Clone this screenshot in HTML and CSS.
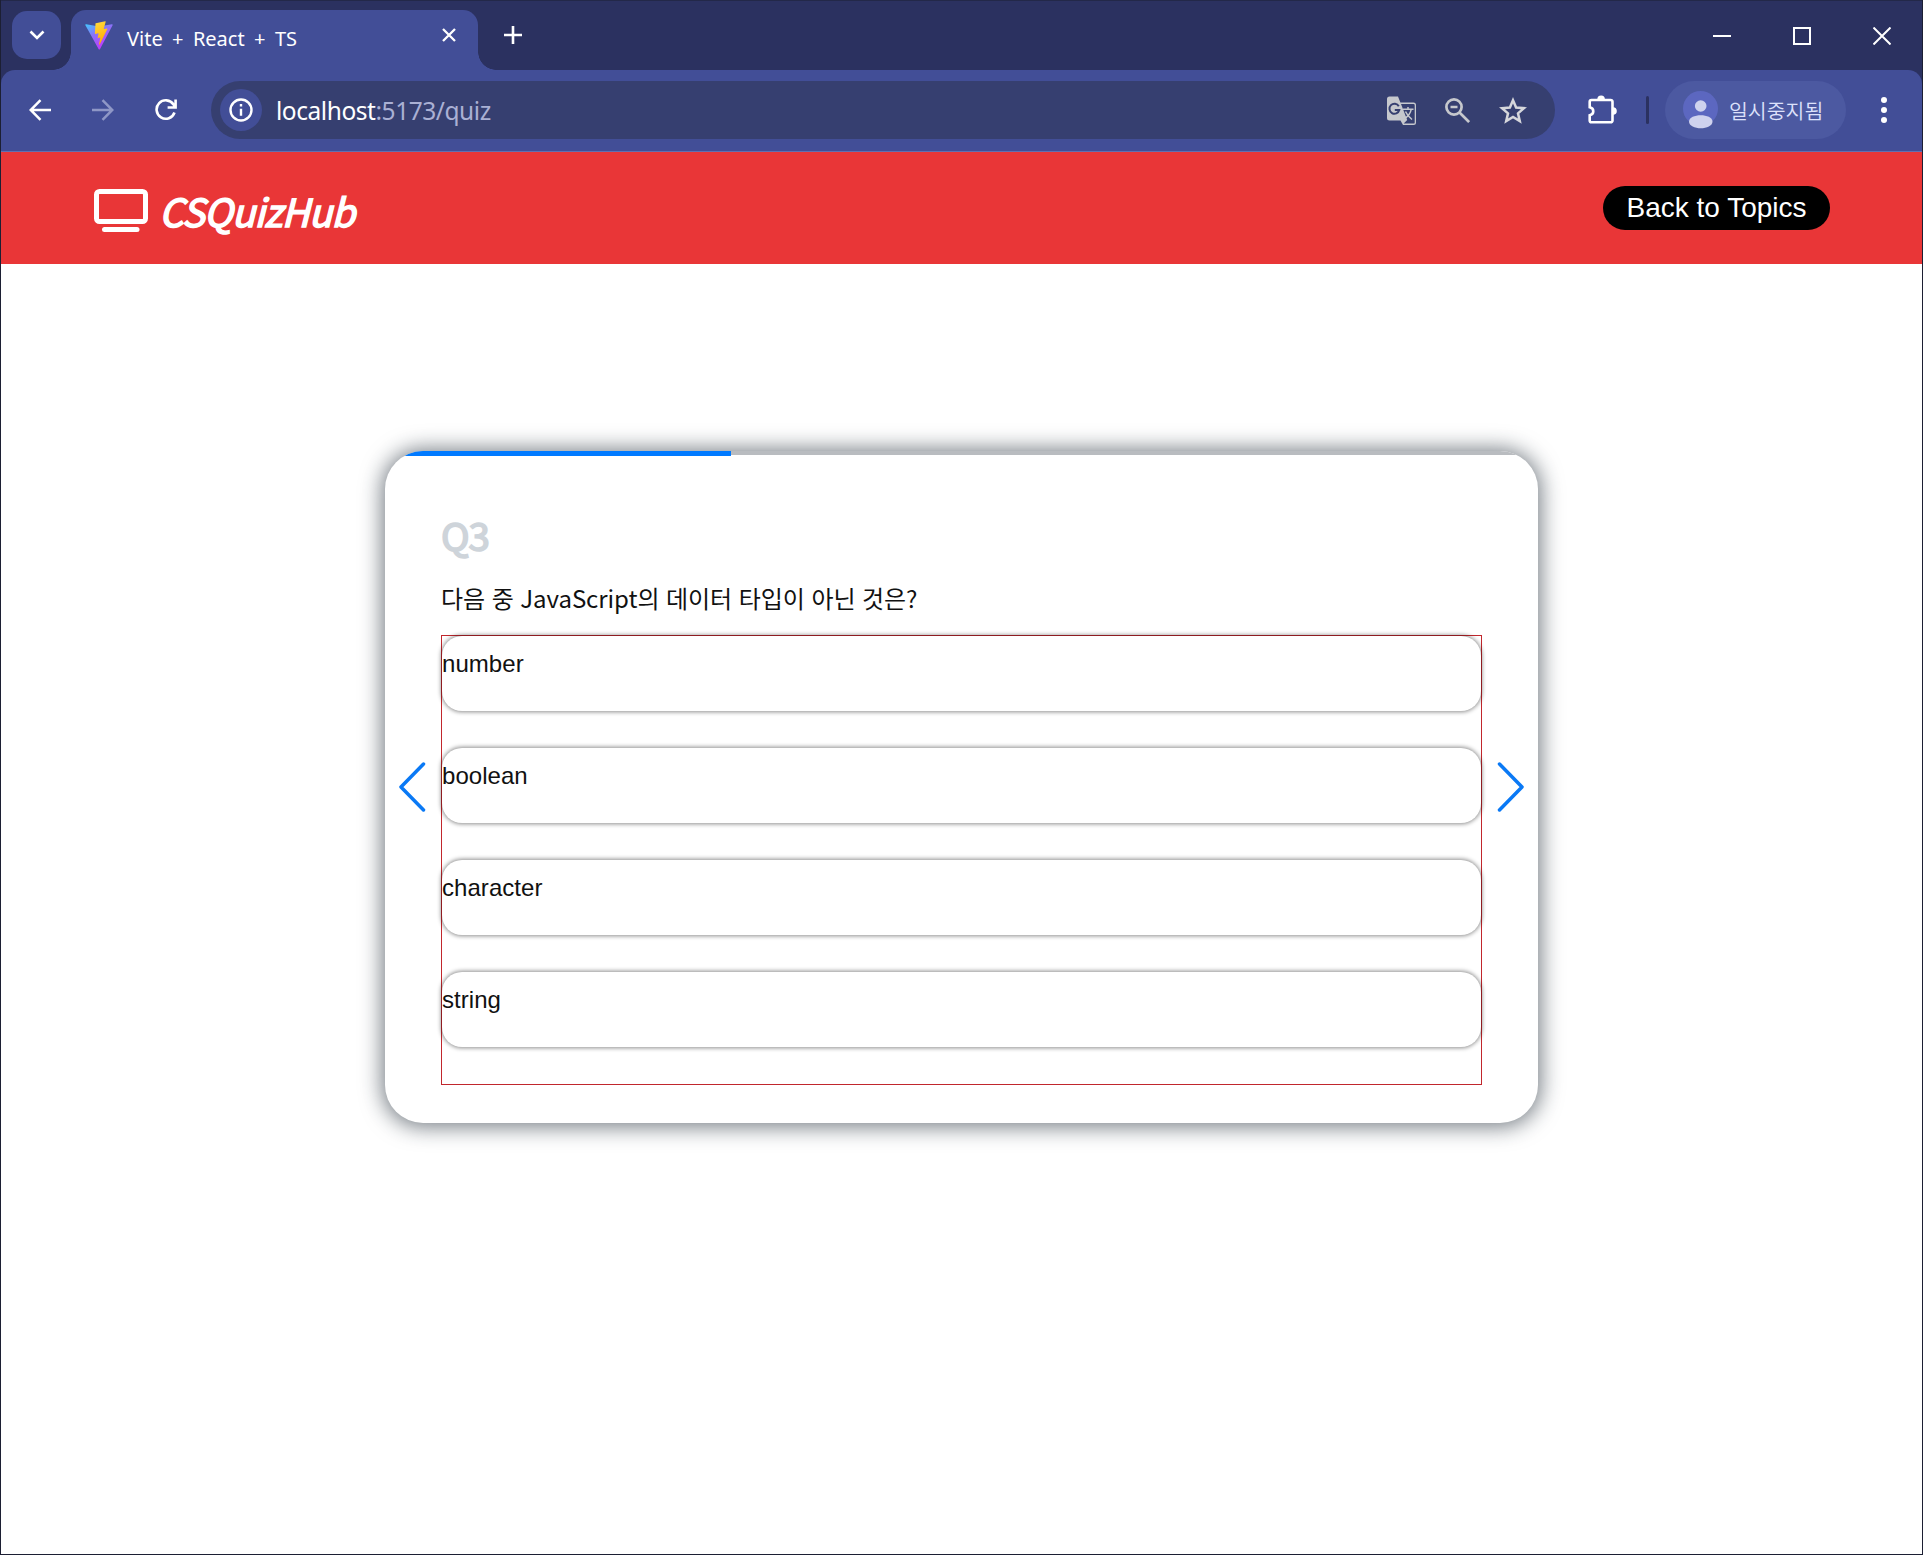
FILE: index.html
```html
<!DOCTYPE html>
<html lang="ko">
<head>
<meta charset="utf-8">
<title>Vite + React + TS</title>
<link rel="stylesheet" href="styles.css">
</head>
<body>
<div class="window">
  <div class="tabstrip">
    <button class="tab-search" aria-label="Search tabs"><svg width="16" height="16" viewBox="0 0 16 16" fill="none" stroke="#fff" stroke-width="2.6"><path d="M1.5 4.5 8 11l6.500-6.500"/></svg></button>
    <div class="tab">
      <svg class="favicon" width="28" height="29" viewBox="0 0 28 29">
        <defs>
          <linearGradient id="va" x1="0" y1="0" x2=".6" y2="1"><stop offset="0" stop-color="#41c8ff"/><stop offset=".45" stop-color="#8a72f8"/><stop offset="1" stop-color="#c534fe"/></linearGradient>
          <linearGradient id="vb" x1=".3" y1="0" x2=".6" y2="1"><stop offset="0" stop-color="#ffd83a"/><stop offset="1" stop-color="#ffa800"/></linearGradient>
        </defs>
        <path d="M27.600 4.300 14.900 28.200c-.3.500-1 .5-1.200 0L.4 4.300c-.3-.6.200-1.200.8-1.100L14 5.500l12.800-2.300c.7-.1 1.100.6.8 1.100z" fill="url(#va)"/>
        <path d="M20.200.3 10.800 2.200c-.2 0-.3.200-.3.300L9.900 12.500c0 .3.200.5.500.4l2.700-.6c.3-.1.500.200.400.5l-.8 3.900c-.1.300.200.500.500.400l1.600-.5c.3-.1.500.2.500.5l-1.300 6.100c-.1.400.4.600.6.300l.2-.2L22.400 8c.1-.3-.1-.6-.4-.5l-2.800.5c-.3.100-.5-.2-.4-.400L20.700.8c0-.3-.2-.6-.5-.5z" fill="url(#vb)"/>
      </svg>
      <span class="tab-title">Vite + React + TS</span>
      <svg class="tab-close" width="14" height="14" viewBox="0 0 14 14" stroke="#fff" stroke-width="2.300"><path d="M1 1l12 12M13 1L1 13"/></svg>
    </div>
    <svg class="new-tab" width="18" height="18" viewBox="0 0 18 18" stroke="#fff" stroke-width="2.600"><path d="M9 0v18M0 9h18"/></svg>
    <div class="controls">
      <svg width="18" height="18" viewBox="0 0 18 18" stroke="#fff" stroke-width="2"><path d="M0 9h18"/></svg>
      <svg width="18" height="18" viewBox="0 0 18 18" fill="none" stroke="#fff" stroke-width="2"><path d="M1 1h16v16H1z"/></svg>
      <svg width="18" height="18" viewBox="0 0 18 18" stroke="#fff" stroke-width="2"><path d="M.5.5l17 17M17.500.5l-17 17"/></svg>
    </div>
  </div>

  <div class="toolbar">
    <svg class="nav-back" width="22" height="22" viewBox="0 0 22 22" fill="none" stroke="#fff" stroke-width="2.500"><path d="M22 11H2M11.500 1.200 1.700 11l9.800 9.800"/></svg>
    <svg class="nav-forward" width="22" height="22" viewBox="0 0 22 22" fill="none" stroke="#8f97c6" stroke-width="2.500"><path d="M0 11h20M10.500 1.200 20.300 11l-9.800 9.800"/></svg>
    <svg class="nav-reload" width="22" height="22" viewBox="0 0 22 22" fill="none" stroke="#fff" stroke-width="2.600"><path d="M19.500 13.500A9.200 9.200 0 1 1 18.500 5.500L20.300 8M20.600.5v8h-8"/></svg>
    <div class="address">
      <span class="site-info"><svg width="24" height="24" viewBox="0 0 24 24" fill="none" stroke="#fff" stroke-width="2.400"><circle cx="12" cy="12" r="10.500"/><path d="M12 10.800v7M12 6v2.600"/></svg></span>
      <span class="url">localhost<span class="path">:5173/quiz</span></span>
      <svg class="act-translate" width="30" height="30" viewBox="0 0 30 30">
        <path d="M2.500.5H11l2.400 6H26.500a2.500 2.500 0 0 1 2.500 2.500v17.500a2.500 2.500 0 0 1-2.500 2.500H16l-2.500-4.500H2.500A2.500 2.500 0 0 1 0 22V3A2.500 2.500 0 0 1 2.500.5z" fill="#c6c8cd"/>
        <path d="M14 8h12.500a1.200 1.200 0 0 1 1.200 1.200v17.200a1.200 1.200 0 0 1-1.200 1.200H16.700l3.500-3.500z" fill="#363f70"/>
        <path d="M11.800 10.200A5 5 0 1 0 12.300 14H7.800" fill="none" stroke="#363f70" stroke-width="2"/>
        <path d="M16 13.200h10.500M21 11v2.200M24.300 13.200c-.8 4-3.500 7.500-7 9.800M18.500 15.500c1 2.500 3.500 5.500 6.500 8" fill="none" stroke="#c6c8cd" stroke-width="1.500"/>
      </svg>
      <svg class="act-zoom" width="25" height="25" viewBox="0 0 25 25" fill="none" stroke="#c6c8cd" stroke-width="2.700"><circle cx="9" cy="9" r="7.600"/><path d="M14.500 14.500l9.600 9.600M5.500 9h7"/></svg>
      <svg class="act-star" width="28" height="27" viewBox="0 0 28 27" fill="none" stroke="#d6d7dc" stroke-width="2.500"><path d="M14 3.200l3.100 7.300 7.900.7-6 5.200 1.800 7.700L14 20l-6.800 4.100L9 16.400l-6-5.200 7.900-.7z"/></svg>
    </div>
    <svg class="extensions" width="29" height="29" viewBox="0 0 29 29"><path d="M3.500 5h19.200a1.800 1.800 0 0 1 1.800 1.800v18.700a1.800 1.800 0 0 1-1.800 1.800H3.500a1.800 1.800 0 0 1-1.800-1.800v-5.300c4.800-1 4.800-7 0-8V6.800A1.800 1.800 0 0 1 3.500 5z" fill="none" stroke="#fff" stroke-width="2.600"/><path d="M9.300 4.500a3.800 4 0 0 1 7.600 0zM25 12.200a3.800 3.800 0 0 1 0 7.600z" fill="#fff"/></svg>
    <span class="divider"></span>
    <div class="profile">
      <svg width="35" height="38" viewBox="0 0 35 38"><circle cx="17.500" cy="17.500" r="17.500" fill="#5c67c0"/><circle cx="17.700" cy="15" r="5.800" fill="#cfd2ee"/><path d="M6 30.500c0-8.500 23.500-8.500 23.500 0 0 9-23.500 9-23.500 0z" fill="#cfd2ee"/></svg>
      <span>일시중지됨</span>
    </div>
    <svg class="menu" width="6" height="26" viewBox="0 0 6 26" fill="#fff"><circle cx="3" cy="3" r="3"/><circle cx="3" cy="13" r="3"/><circle cx="3" cy="23" r="3"/></svg>
  </div>

  <header class="site-header">
    <div class="brand">
      <svg width="54" height="44" viewBox="0 0 54 44" fill="none" stroke="#fff" stroke-width="5"><rect x="2.500" y="2.500" width="49" height="30" rx="3"/><path d="M10.500 40.500h32.500" stroke-linecap="round"/></svg>
      <span class="brand-name">CSQuizHub</span>
    </div>
    <button class="back">Back to Topics</button>
  </header>

  <main class="stage">
    <section class="card">
      <div class="progress"><div class="progress-fill" style="width:30%"></div></div>
      <div class="slide">
        <svg class="arrow" width="27" height="50" viewBox="0 0 27 50"><path d="M24.500 2 2 25l22.500 23"/></svg>
        <div class="quiz">
          <h2>Q3</h2>
          <p class="question">다음 중 JavaScript의 데이터 타입이 아닌 것은?</p>
          <ul class="options">
            <li>number</li>
            <li>boolean</li>
            <li>character</li>
            <li>string</li>
          </ul>
        </div>
        <svg class="arrow" width="27" height="50" viewBox="0 0 27 50"><path d="M2.500 2 25 25 2.500 48"/></svg>
      </div>
    </section>
  </main>
</div>
</body>
</html>
```
FILE: styles.css
```css
* { box-sizing: border-box; }
body { margin: 0; background: #fff; font-family: "Liberation Sans", Arial, sans-serif; }
svg { display: block; flex: none; }
button { border: 0; padding: 0; font: inherit; }

.window {
  height: 1555px;
  border: solid #1c1f33;
  border-width: 0 1px 1px;
  background: linear-gradient(#2b3160 100px, #fff 0);
  display: flex;
  flex-direction: column;
}

/* browser tabs */
.tabstrip {
  height: 70px;
  flex: none;
  background: #2b3160;
  display: flex;
  align-items: flex-start;
  padding-left: 11px;
  box-shadow: inset 0 1px #232849;
}
.tab-search {
  width: 49px;
  height: 48px;
  margin-top: 11px;
  border-radius: 15px;
  background: #424e97;
  display: grid;
  place-items: center;
}
.tab {
  position: relative;
  width: 407px;
  height: 60px;
  margin: 10px 0 0 10px;
  padding: 11px 22px 0 14px;
  border-radius: 15px 15px 0 0;
  background: #424e97;
  display: flex;
}
.tab::before, .tab::after {
  content: "";
  position: absolute;
  bottom: 0;
  width: 18px;
  height: 18px;
}
.tab::before { left: -18px; background: radial-gradient(circle at 0 0, transparent 17.500px, #424e97 18px); }
.tab::after { right: -18px; background: radial-gradient(circle at 100% 0, transparent 17.500px, #424e97 18px); }
.tab-title {
  margin: 5px 0 0 14px;
  font: 20px/26px "Noto Sans", sans-serif;
  word-spacing: 4.200px;
  color: #fff;
  white-space: nowrap;
}
.tab-close { margin: 7px 0 0 auto; }
.new-tab { margin: 26px 0 0 26px; }
.controls { display: flex; gap: 62px; margin: 27px 31px 0 auto; }

/* browser toolbar */
.toolbar {
  height: 82px;
  flex: none;
  display: flex;
  align-items: center;
  padding: 0 35px 1px 28px;
  background: #424e97;
  border-bottom: 1px solid #6270b0;
  border-radius: 14px 14px 0 0;
}
.nav-forward { margin-left: 41px; }
.nav-reload { margin-left: 41px; }
.address {
  width: 1344px;
  height: 58px;
  margin-left: 34px;
  padding: 0 28px 0 9px;
  border-radius: 29px;
  background: #363f70;
  display: flex;
  align-items: center;
}
.site-info {
  width: 42px;
  height: 42px;
  border-radius: 50%;
  background: #424e97;
  display: grid;
  place-items: center;
}
.url {
  margin: 2px 0 0 14px;
  font: 24.500px/34px "Noto Sans", sans-serif;
  letter-spacing: -.45px;
  color: #fff;
}
.url .path { color: #aab0d4; }
.act-translate { margin: 2px 0 0 auto; }
.act-zoom { margin: 1px 0 0 28px; }
.act-star { margin: 1px 0 0 29px; }
.extensions { margin: 0 0 2px 33px; }
.divider { width: 3px; height: 28px; margin-left: 29px; border-radius: 2px; background: #2b3160; }
.profile {
  width: 181px;
  height: 58px;
  margin-left: 16px;
  padding-left: 18px;
  border-radius: 29px;
  background: #4c59a1;
  display: flex;
  align-items: center;
  gap: 11px;
  font: 350 20.500px/28px "Noto Sans CJK KR", sans-serif;
  color: #dde1fb;
  white-space: nowrap;
}
.profile span { margin-top: -1px; }
.menu { margin-left: auto; }

/* page header */
.site-header {
  height: 112px;
  flex: none;
  display: flex;
  justify-content: space-between;
  align-items: flex-start;
  padding: 34px 92px 0 93px;
  background: #e93637;
}
.brand { display: flex; padding-top: 3px; color: #fff; }
.brand-name {
  margin: -1px 0 0 11px;
  font: italic 400 38.500px/44px "Noto Sans CJK KR", sans-serif;
  letter-spacing: -.8px;
  -webkit-text-stroke: 1.500px currentColor;
}
.back {
  width: 227px;
  height: 44px;
  border-radius: 22px;
  background: #000;
  color: #fff;
  font-size: 28px;
  line-height: 44px;
}

/* quiz card */
.stage { flex: 1; background: #fff; padding-top: 187px; }
.card {
  width: 1153px;
  height: 672px;
  margin: 0 auto;
  border-radius: 38px;
  background: #fff;
  overflow: hidden;
  box-shadow: 0 1px 21px 3px rgba(20, 32, 45, .58);
}
.progress { height: 4px; background: #b9bcc0; }
.progress-fill { position: relative; height: 5px; background: #007aff; }
.slide { display: flex; align-items: flex-start; padding: 0 14px; }
.quiz { width: 1041px; margin: 0 15px; }
.quiz h2 {
  margin: 51px 0 0;
  font: 400 38.500px/56px "Noto Sans CJK KR", sans-serif;
  letter-spacing: -1px;
  -webkit-text-stroke: 1.700px currentColor;
  color: #ced4da;
}
.question {
  margin: 18px 0 0;
  height: 55px;
  font: 24px/36px "Noto Sans CJK KR", sans-serif;
  letter-spacing: -.07px;
  color: #111;
}
.options {
  list-style: none;
  margin: 0;
  padding: 0;
  border: 1px solid #c1272d;
}
.options li {
  height: 75px;
  margin-bottom: 37px;
  padding-top: 14px;
  border-radius: 20px;
  box-shadow: 0 0 4px 1px rgba(0, 0, 0, .45);
  font-size: 24px;
  line-height: 28px;
  letter-spacing: .05px;
  color: #111;
}
.arrow {
  margin-top: 307px;
  fill: none;
  stroke: #0a79f5;
  stroke-width: 3.500;
  stroke-linecap: round;
  stroke-linejoin: round;
}
```
